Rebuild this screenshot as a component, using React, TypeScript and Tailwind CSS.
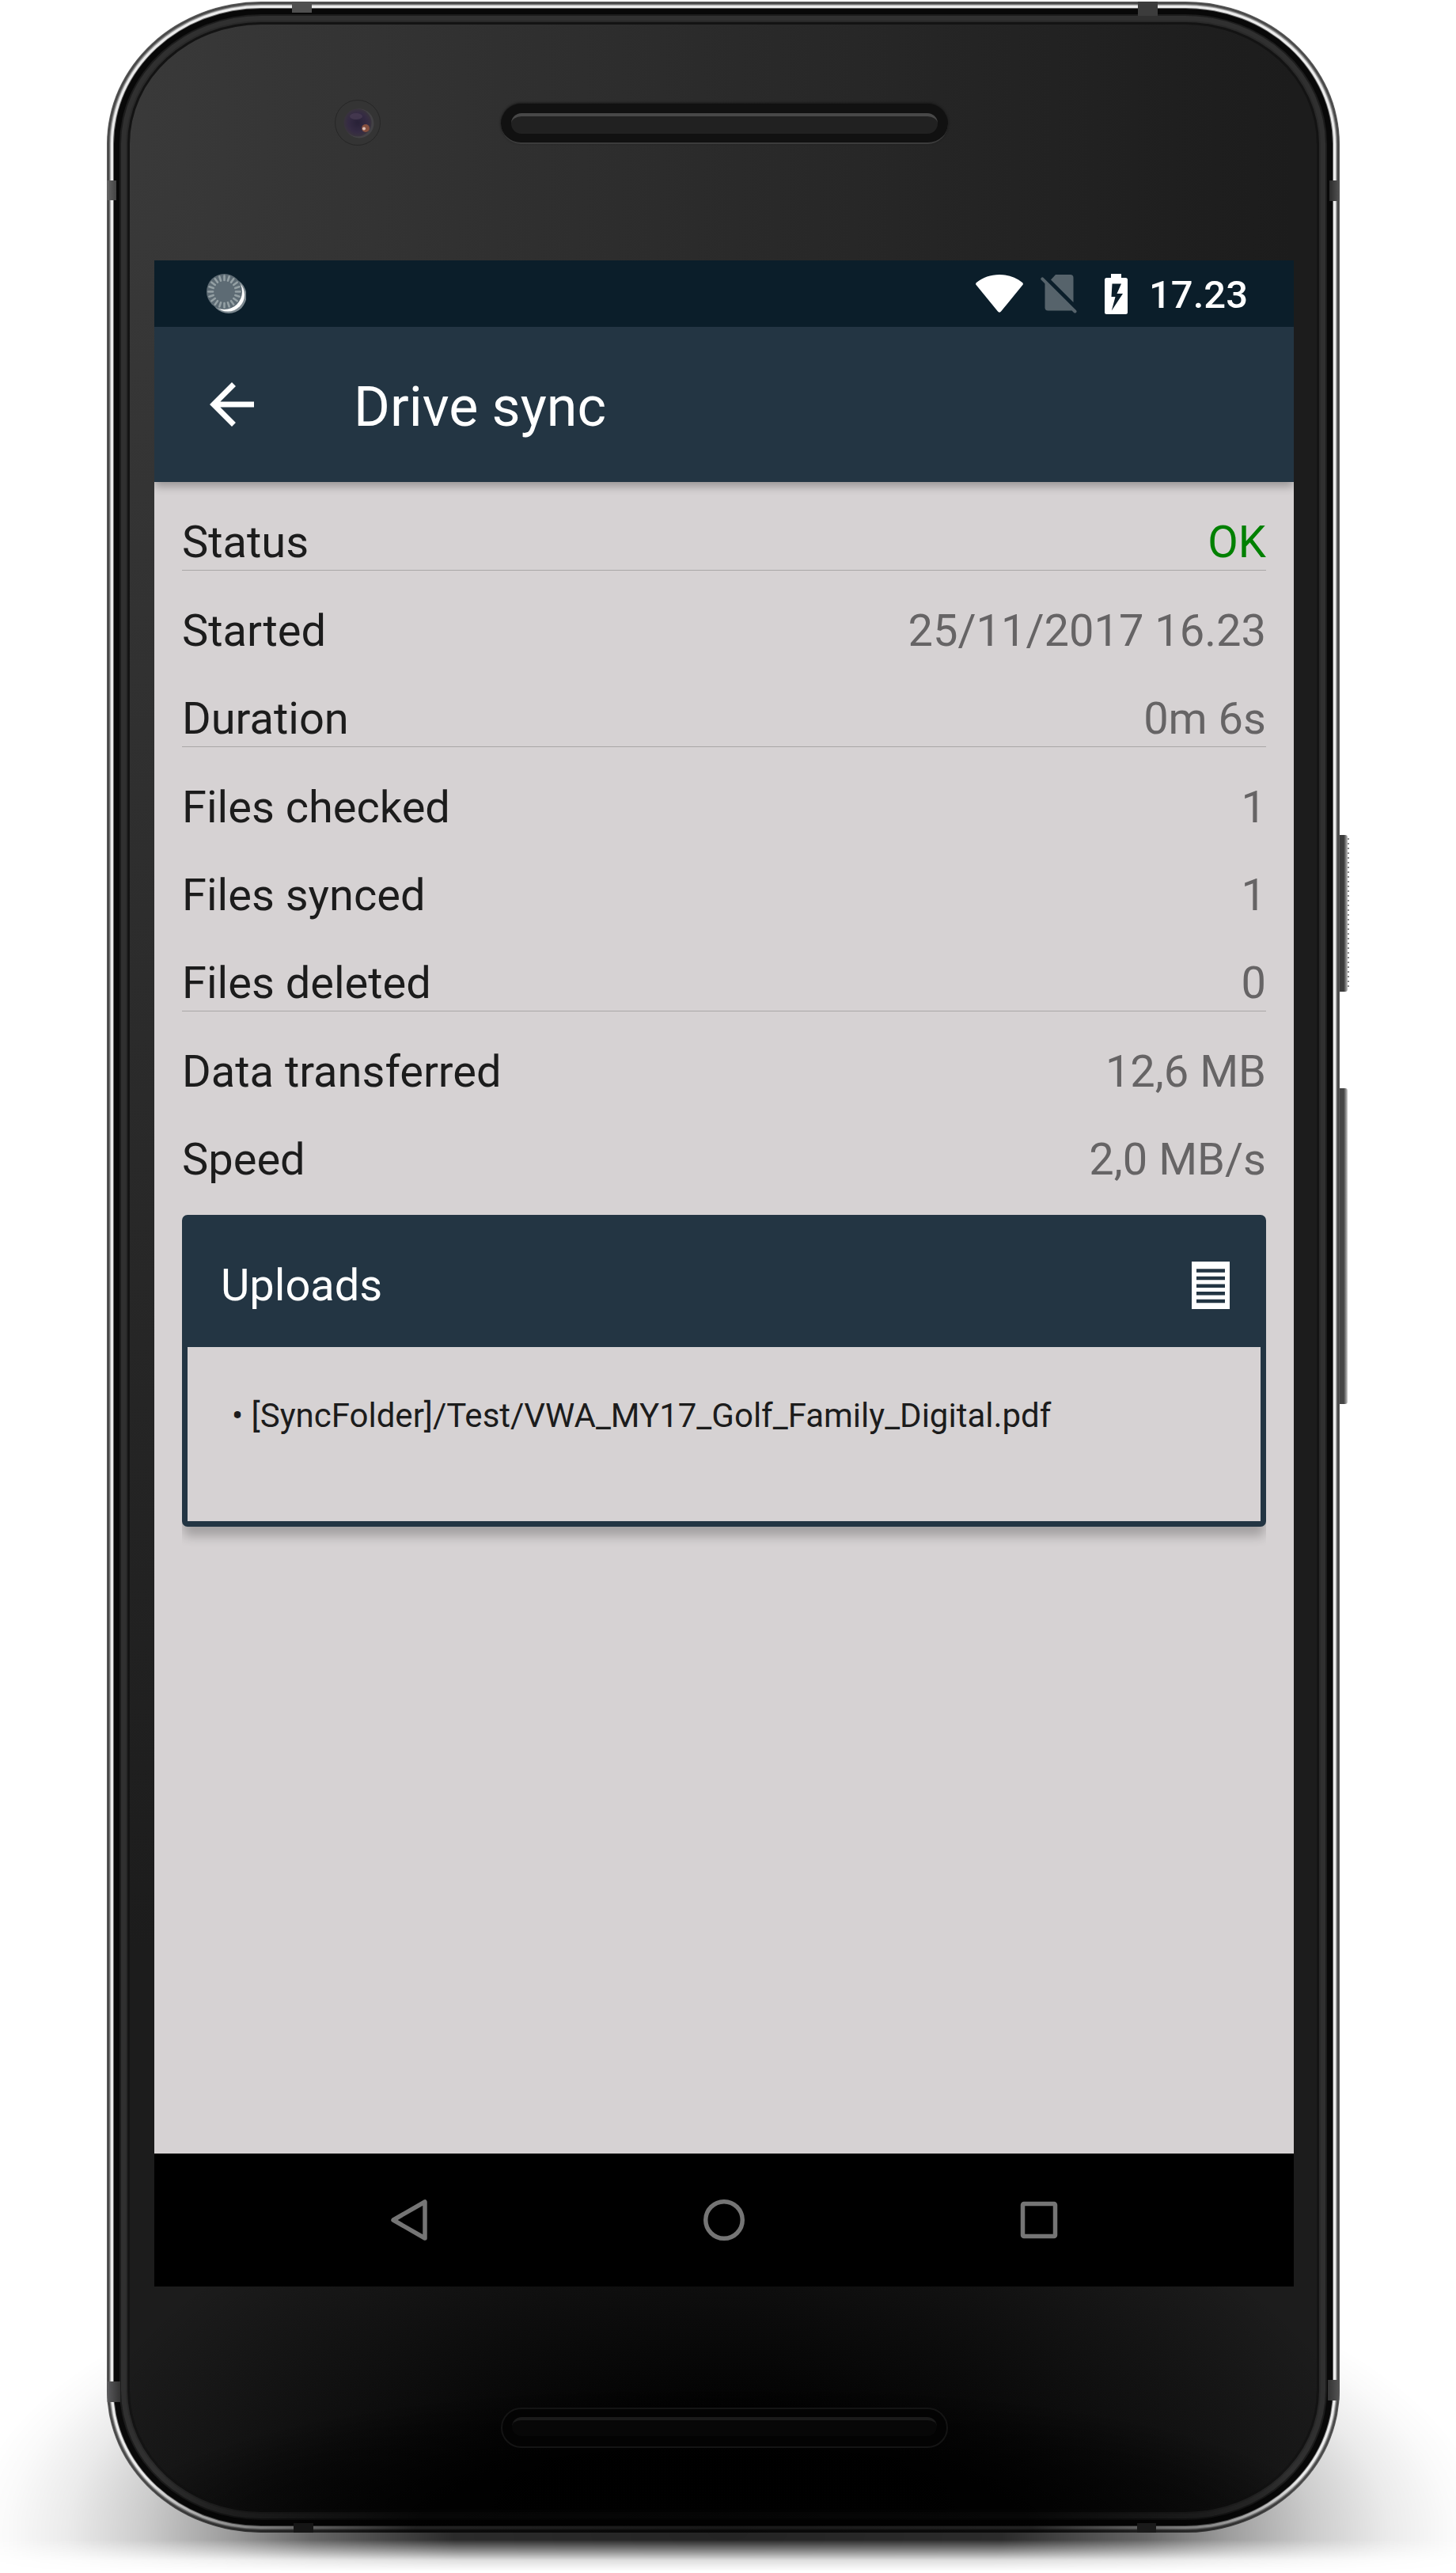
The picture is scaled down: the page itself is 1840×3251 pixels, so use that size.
type Row = { label: string; value: string; ok?: boolean; divider?: boolean };

const rows: Row[] = [
  { label: "Status", value: "OK", ok: true, divider: true },
  { label: "Started", value: "25/11/2017 16.23" },
  { label: "Duration", value: "0m 6s", divider: true },
  { label: "Files checked", value: "1" },
  { label: "Files synced", value: "1" },
  { label: "Files deleted", value: "0", divider: true },
  { label: "Data transferred", value: "12,6 MB" },
  { label: "Speed", value: "2,0 MB/s" },
];

const uploads = ["[SyncFolder]/Test/VWA_MY17_Golf_Family_Digital.pdf"];

const ticks = Array.from({ length: 20 }, (_, i) => i * 18);

function SyncIcon() {
  return (
    <svg className="size-[50px]" viewBox="0 0 50 50" aria-hidden="true">
      <circle cx="28" cy="27.500" r="22.500" fill="#7c888f" />
      <circle cx="27" cy="26.500" r="21" fill="#ffffff" />
      <circle cx="22.500" cy="22.500" r="22.500" fill="#5d6b74" />
      {ticks.map((a) => (
        <line
          key={a}
          x1="22.500"
          y1="2.500"
          x2="22.500"
          y2="8"
          stroke="#94a0a4"
          strokeWidth="2.600"
          strokeLinecap="round"
          transform={`rotate(${a} 22.500 22.500)`}
        />
      ))}
    </svg>
  );
}

function WifiIcon() {
  return (
    <svg className="h-12 w-[60px]" viewBox="0 0 60 48" fill="#fff" aria-hidden="true">
      <path d="M1 10C9 3.500 19 0 30 0s21 3.500 29 10c1 .9 1.200 2 .4 3.100L32 46.600c-1.100 1.400-2.900 1.400-4 0L.6 13.100C-.2 12 0 10.900 1 10z" />
    </svg>
  );
}

function NoSimIcon() {
  return (
    <svg className="h-[49px] w-[46px]" viewBox="0 0 46 49" aria-hidden="true">
      <path d="M19 0h18.500a4 4 0 0 1 4 4v31L13 6.500z" fill="#56636b" />
      <path d="M5.500 8.500 41 44.500c-1 .8-2 1-3.500 1h-28a4 4 0 0 1-4-4z" fill="#56636b" />
      <path d="M2.300 5.300 43.500 46.500" stroke="#56636b" strokeWidth="4" strokeLinecap="round" />
    </svg>
  );
}

function BatteryIcon() {
  return (
    <svg className="h-[51px] w-[29px]" viewBox="0 0 29 51" aria-hidden="true">
      <path
        fillRule="evenodd"
        fill="#fff"
        d="M8 0h13v5h5.500A2.500 2.500 0 0 1 29 7.500v41a2.500 2.500 0 0 1-2.500 2.500h-24A2.500 2.500 0 0 1 0 48.500v-41A2.500 2.500 0 0 1 2.500 5H8zM9.500 12.500 8.500 29h5L8.800 46.500 23 25h-7.500l5.500-12.500z"
      />
    </svg>
  );
}

function StatusBar() {
  return (
    <div className="flex h-[84px] shrink-0 items-center justify-between bg-[#0b1e2a] pr-[58px] pl-[66px]">
      <SyncIcon />
      <div className="flex items-center">
        <WifiIcon />
        <span className="ml-[22px] flex">
          <NoSimIcon />
        </span>
        <span className="ml-[35px] flex">
          <BatteryIcon />
        </span>
        <span className="ml-[27px] pt-1 text-[49px] leading-[60px] font-medium text-white">17.23</span>
      </div>
    </div>
  );
}

function Toolbar() {
  return (
    <header className="z-10 flex h-[196px] shrink-0 items-center bg-[#233543] pl-14 shadow-[0_7px_10px_-1px_rgba(0,0,0,0.28)]">
      <button type="button" aria-label="Back" className="flex">
        <svg className="size-[84px]" viewBox="0 0 24 24" fill="#fff" aria-hidden="true">
          <path d="M20 11H7.830l5.590-5.590L12 4l-8 8 8 8 1.410-1.410L7.830 13H20v-2z" />
        </svg>
      </button>
      <h1 className="ml-28 pt-[6px] text-[70px] leading-[84px] text-white">Drive sync</h1>
    </header>
  );
}

function Uploads() {
  return (
    <div className="mt-[35px] overflow-hidden pb-7">
      <section className="rounded-[7px] border-[7px] border-[#233543] bg-[#d6d2d3] shadow-[0_14px_14px_-2px_rgba(0,0,0,0.24)]">
        <div className="flex h-[160px] items-center justify-between bg-[#233543] pt-1 pr-[39px] pl-[42px]">
          <h2 className="text-[56px] leading-[70px] text-white">Uploads</h2>
          <button type="button" aria-label="Show list" className="flex">
            <svg className="h-[60px] w-12" viewBox="0 0 48 60" aria-hidden="true">
              <rect width="48" height="60" fill="#fff" />
              <path d="M6 11.500h36M6 21h36M6 30.700h36M6 40.300h36M6 50h36" stroke="#233543" strokeWidth="4.400" />
            </svg>
          </button>
        </div>
        <ul className="px-14 pt-[59px] pb-[105px] text-[42px] leading-[56px] text-[#1c1c1c]">
          {uploads.map((path) => (
            <li key={path}>• {path}</li>
          ))}
        </ul>
      </section>
    </div>
  );
}

function NavBar() {
  return (
    <nav className="grid h-[168px] shrink-0 grid-cols-3 items-center bg-black px-[123px]">
      <button type="button" aria-label="Back" className="flex justify-center">
        <svg className="size-[60px]" viewBox="0 0 60 60" fill="none" stroke="#757575" strokeWidth="5.500" strokeLinejoin="round" aria-hidden="true">
          <path d="M50 7v46L10 30z" />
        </svg>
      </button>
      <button type="button" aria-label="Home" className="flex justify-center">
        <svg className="size-[60px]" viewBox="0 0 60 60" fill="none" stroke="#757575" strokeWidth="5.500" aria-hidden="true">
          <circle cx="30" cy="30" r="23.250" />
        </svg>
      </button>
      <button type="button" aria-label="Recent apps" className="flex justify-center">
        <svg className="size-[60px]" viewBox="0 0 60 60" fill="none" stroke="#757575" strokeWidth="5.500" aria-hidden="true">
          <rect x="9.500" y="9.500" width="41" height="41" rx="1.500" />
        </svg>
      </button>
    </nav>
  );
}

function Camera() {
  return (
    <svg className="size-[60px]" viewBox="0 0 60 60" aria-hidden="true">
      <defs>
        <radialGradient id="lens" cx="0.5" cy="0.5" r="0.5">
          <stop offset="0" stopColor="#282137" />
          <stop offset="0.7" stopColor="#352b43" />
          <stop offset="1" stopColor="#39333d" />
        </radialGradient>
      </defs>
      <circle cx="30" cy="30" r="28.500" fill="#343434" stroke="#272727" />
      <circle cx="32" cy="31" r="18.500" fill="#434245" />
      <circle cx="30" cy="30" r="17.500" fill="url(#lens)" />
      <ellipse cx="28" cy="22" rx="8" ry="4" fill="#4a3d54" opacity="0.7" />
      <circle cx="40" cy="37" r="5" fill="#86503f" />
      <circle cx="38" cy="37.500" r="2" fill="#dcc0b8" />
    </svg>
  );
}

function Band({ className }: { className: string }) {
  return <span className={`absolute ${className}`} />;
}

export default function App() {
  return (
    <main className="relative flex min-h-screen flex-col overflow-hidden bg-white pt-[2px] pr-[147px] pb-[51px] pl-[135px] font-[Roboto,sans-serif]">
      <div className="absolute inset-x-0 bottom-0 h-[460px] bg-[radial-gradient(960px_400px_at_50%_410px,rgba(0,0,0,0.86)_0%,rgba(0,0,0,0.83)_36%,rgba(0,0,0,0.6)_55%,rgba(0,0,0,0.38)_66%,rgba(0,0,0,0.2)_77%,rgba(0,0,0,0.08)_87%,rgba(0,0,0,0.02)_95%,transparent_100%)] [mask-image:linear-gradient(to_bottom,black_0,black_418px,rgba(0,0,0,0.55)_432px,rgba(0,0,0,0.15)_444px,transparent_458px)]" />

      <div className="relative flex flex-1 flex-col">
        <span className="absolute top-[1053px] -right-[10px] h-[198px] w-3 rounded-r-[3px] bg-linear-to-r from-[#3a3a3a] from-60% to-[#c4c4c4]" />
        <span className="absolute top-[1053px] -right-[12px] my-1 h-[190px] w-[2px] bg-[repeating-linear-gradient(to_bottom,#8a8a8a_0,#8a8a8a_2px,#fff_2px,#fff_6px)]" />
        <span className="absolute top-[1373px] -right-[10px] h-[399px] w-3 rounded-r-[3px] bg-linear-to-r from-[#454545] from-60% to-[#cfcfcf]" />

        <div className="relative flex flex-1 flex-col overflow-hidden rounded-[195px/180px] bg-[radial-gradient(850px_500px_at_50%_100%,#020202_0%,#020202_30%,transparent_100%),radial-gradient(1500px_2300px_at_0%_5%,#3a3a3a_0%,#1c1c1c_100%)] pr-[58px] pl-[60px] shadow-[inset_0_0_0_1px_#5b5b5b,inset_0_0_0_3px_#484848,inset_0_0_0_4px_#777,inset_0_0_0_5px_#aaa,inset_0_0_0_8px_#ececec,inset_0_0_0_9px_#666,inset_0_0_0_16px_#080808,inset_0_0_0_18px_#1c1c1c,inset_0_0_0_24px_#303030,inset_0_0_0_26px_#292929,inset_0_0_0_29px_#131313]">
          <div className="grid h-[327px] shrink-0 grid-cols-[1fr_565px_1fr] items-start pt-[123px]">
            <div className="flex justify-center pl-[76px]">
              <Camera />
            </div>
            <div className="mt-[6px] h-[51px] rounded-full border-b-2 border-[#3c3c3c] bg-[#111] px-[13px] pt-3 shadow-[0_-1px_3px_#161616]">
              <div className="h-[26px] rounded-full border-t-4 border-[#484848] bg-[#212121]" />
            </div>
          </div>

          <div className="relative z-10 flex flex-1 flex-col bg-[#d6d2d3]">
            <StatusBar />
            <div className="flex flex-1 flex-col overflow-hidden">
              <Toolbar />
              <div className="flex-1 px-[35px]">
                <dl>
                  {rows.map((row) => (
                    <div
                      key={row.label}
                      className={`flex justify-between pt-[41px] text-[56px] leading-[70px] ${
                        row.divider ? "border-b border-[#a9a7a7]" : ""
                      }`}
                    >
                      <dt className="text-[#1c1c1c]">{row.label}</dt>
                      <dd className={row.ok ? "text-[#008000]" : "text-[#666465]"}>{row.value}</dd>
                    </div>
                  ))}
                </dl>
                <Uploads />
              </div>
            </div>
            <NavBar />
          </div>

          <div className="relative z-10 flex h-[311px] shrink-0 items-start justify-center pt-[153px]">
            <div className="h-[51px] w-[565px] rounded-full border-2 border-[#141414] bg-[#030303] px-3 pt-[10px]">
              <div className="h-6 rounded-full border-t-4 border-[#1a1a1a] bg-[#070707]" />
            </div>
          </div>

          <div className="absolute inset-x-0 bottom-0 h-[190px] bg-[radial-gradient(780px_190px_at_50%_100%,rgba(0,0,0,0.9)_0%,rgba(0,0,0,0.86)_50%,rgba(0,0,0,0.4)_80%,transparent_100%)]" />

          <Band className="top-0 left-[234px] h-[14px] w-[25px] bg-[#505050]" />
          <Band className="top-0 right-[230px] h-[18px] w-[25px] bg-[#3c3c3c]" />
          <Band className="top-[226px] left-0 h-[25px] w-3 bg-linear-to-r from-[#666] to-[#444]" />
          <Band className="top-[226px] right-0 h-[26px] w-[13px] bg-linear-to-r from-[#2c2c2c] to-[#555]" />
          <Band className="bottom-[165px] left-0 h-[26px] w-[17px] bg-linear-to-r from-[#5c5c5e] to-[#333]" />
          <Band className="right-0 bottom-[167px] h-[26px] w-[15px] bg-linear-to-r from-[#333] to-[#555]" />
          <Band className="bottom-0 left-[236px] h-3 w-[25px] bg-[#151515]" />
          <Band className="right-[232px] bottom-0 h-3 w-[24px] bg-[#1a1a1a]" />
        </div>
      </div>
    </main>
  );
}
